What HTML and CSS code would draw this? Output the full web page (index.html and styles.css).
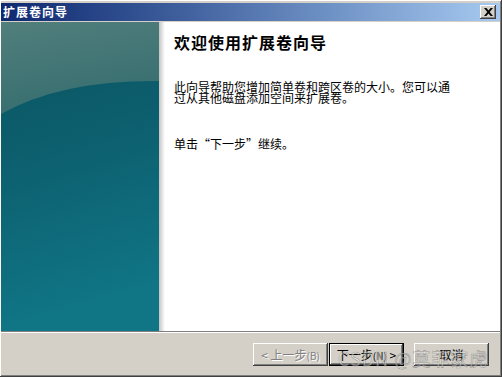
FILE: index.html
```html
<!DOCTYPE html>
<html lang="zh-CN">
<head>
<meta charset="utf-8">
<link rel="stylesheet" href="styles.css">
</head>
<body>
<div class="window">
  <div class="titlebar">
    <span class="title">扩展卷向导</span>
    <button class="close" aria-label="关闭">
      <svg width="9" height="8" viewBox="0 0 9 8"><path d="M0 0h2.4L4.5 2.6 6.6 0H9L5.7 4 9 8H6.6L4.5 5.4 2.4 8H0l3.3-4z" fill="#000"/></svg>
    </button>
  </div>
  <div class="main">
    <div class="banner">
      <svg width="158" height="309" viewBox="0 0 158 309" preserveAspectRatio="none">
        <defs>
          <linearGradient id="top" x1="0" y1="0" x2="0.3" y2="1">
            <stop offset="0" stop-color="#517f7c"/>
            <stop offset="1" stop-color="#376e70"/>
          </linearGradient>
          <linearGradient id="bot" x1="0" y1="0" x2="0.15" y2="1">
            <stop offset="0" stop-color="#0a5260"/>
            <stop offset="0.5" stop-color="#0d6170"/>
            <stop offset="1" stop-color="#107686"/>
          </linearGradient>
        </defs>
        <rect width="158" height="309" fill="url(#bot)"/>
        <path d="M0 0H158V59Q60 58 0 92Z" fill="url(#top)"/>
      </svg>
    </div>
    <div class="shade"></div>
    <div class="content">
      <h1 class="heading">欢迎使用扩展卷向导</h1>
      <p class="text intro">此向导帮助您增加简单卷和跨区卷的大小。您可以通过从其他磁盘添加空间来扩展卷。</p>
      <p class="text">单击“下一步”继续。</p>
    </div>
  </div>
  <div class="footer">
    <button class="btn disabled">&lt; 上一步<span class="acc">(B)</span></button>
    <button class="btn default">下一步<span class="acc">(N)</span> &gt;</button>
    <button class="btn cancel">取消</button>
    <span class="watermark">CSDN @莫菲家虎</span>
  </div>
</div>
</body>
</html>
```
FILE: styles.css
```css
html, body {
  margin: 0;
  padding: 0;
}
body {
  width: 502px;
  height: 377px;
  overflow: hidden;
  background: #d4d0c8;
  font-family: "Noto Sans CJK SC", "Liberation Sans", sans-serif;
  font-size: 12px;
}
.window {
  box-sizing: border-box;
  width: 502px;
  height: 377px;
  display: flex;
  flex-direction: column;
  padding: 3px 2px 2px 1px;
  background: #d4d0c8;
  box-shadow: inset -1px -1px #404040, inset 1px 1px #ffffff, inset -2px -2px #808080;
}
.titlebar {
  height: 18px;
  display: flex;
  align-items: center;
  justify-content: space-between;
  padding: 0 4px 0 2px;
  background: linear-gradient(to right, #0f2870 0%, #2e4d8e 25%, #6d90c4 65%, #a6caf0 100%);
}
.title {
  color: #fff;
  font-weight: bold;
  font-size: 12px;
  letter-spacing: 1px;
  line-height: 14px;
}
.close {
  width: 16px;
  height: 14px;
  padding: 0;
  border: none;
  background: #d4d0c8;
  box-shadow: inset -1px -1px #404040, inset 1px 1px #ffffff, inset -2px -2px #808080;
  display: flex;
  align-items: center;
  justify-content: center;
}
.main {
  margin-top: 1px;
  height: 309px;
  display: flex;
  background: #fff;
}
.banner {
  width: 158px;
  height: 309px;
}
.banner svg {
  display: block;
}
.shade {
  width: 6px;
  background: linear-gradient(to right, #c4c4c4, #ffffff);
}
.content {
  flex: 1;
  padding: 10px 0 0 9px;
  color: #000;
}
.heading {
  margin: 0 0 29px;
  font-size: 16px;
  line-height: 20px;
  font-weight: bold;
  letter-spacing: 1px;
}
.text {
  margin: 0;
  font-size: 12px;
  line-height: 11px;
  max-width: 278px;
}
.intro {
  margin-bottom: 35px;
}
.footer {
  position: relative;
  flex: 1;
  display: flex;
  align-items: center;
  justify-content: flex-end;
  padding-right: 11px;
  border-top: 1px solid #808080;
  box-shadow: inset 0 1px #ffffff;
}
.btn {
  box-sizing: border-box;
  width: 75px;
  height: 23px;
  padding: 0;
  border: none;
  background: #d4d0c8;
  font-family: "Noto Sans CJK SC", "Liberation Sans", sans-serif;
  font-size: 12px;
  color: #000;
  box-shadow: inset -1px -1px #404040, inset 1px 1px #ffffff, inset -2px -2px #808080;
  margin-top: 1px;
}
.acc {
  font-size: 10px;
}
.disabled {
  color: #808080;
  text-shadow: 1px 1px #ffffff;
}
.default {
  margin-left: 1px;
  box-shadow: inset 0 0 0 1px #000, inset -2px -2px #404040, inset 2px 2px #ffffff, inset -3px -3px #808080;
}
.cancel {
  margin-left: 10px;
}
.watermark {
  position: absolute;
  left: 337px;
  top: 13px;
  font-size: 18px;
  letter-spacing: 1px;
  color: rgba(255, 255, 255, 0.45);
  -webkit-text-stroke: 0.6px rgba(90, 90, 90, 0.55);
  pointer-events: none;
}
```
